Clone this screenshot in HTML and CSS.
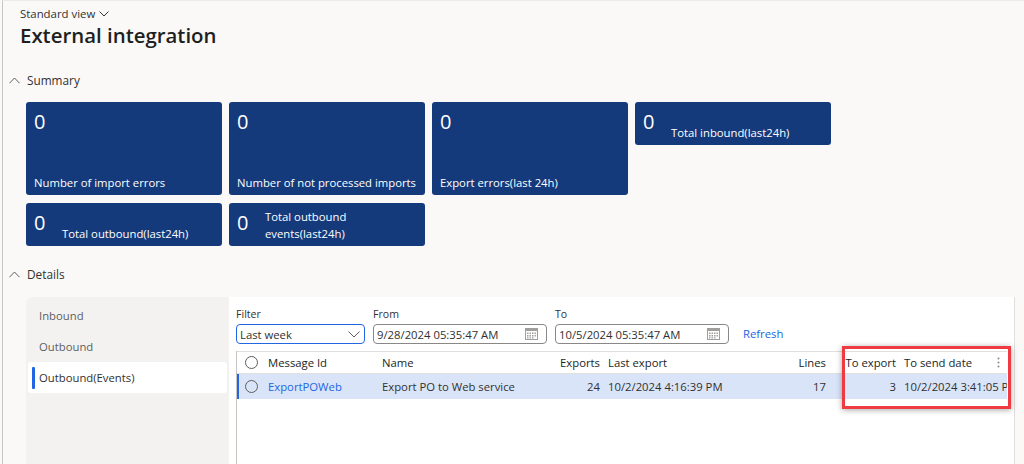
FILE: index.html
```html
<!DOCTYPE html>
<html lang="en">
<head>
<meta charset="utf-8">
<title>External integration</title>
<link rel="stylesheet" href="styles.css">
</head>
<body>
<div class="app">
  <header class="page-head">
    <div class="view-switch">Standard view
      <svg class="chev-down" width="10" height="6" viewBox="0 0 10 6"><path d="M0.5 0.5 L5 5 L9.5 0.5" fill="none" stroke="#323130" stroke-width="1"/></svg>
    </div>
    <h1 class="title">External integration</h1>
  </header>

  <section class="fasttab">
    <div class="fasttab-head">
      <svg class="chev-up" width="11" height="7" viewBox="0 0 11 7"><path d="M0.5 6.2 L5.5 1 L10.5 6.2" fill="none" stroke="#605e5c" stroke-width="1"/></svg>
      <span>Summary</span>
    </div>
    <div class="tiles">
      <div class="tile tile-lg"><div class="tile-num">0</div><div class="tile-label">Number of import errors</div></div>
      <div class="tile tile-lg"><div class="tile-num">0</div><div class="tile-label">Number of not processed imports</div></div>
      <div class="tile tile-lg"><div class="tile-num">0</div><div class="tile-label">Export errors(last 24h)</div></div>
      <div class="tile tile-sm"><div class="tile-num">0</div><div class="tile-label">Total inbound(last24h)</div></div>
      <div class="tile tile-sm"><div class="tile-num">0</div><div class="tile-label">Total outbound(last24h)</div></div>
      <div class="tile tile-sm"><div class="tile-num">0</div><div class="tile-label">Total outbound<br>events(last24h)</div></div>
    </div>
  </section>

  <section class="fasttab">
    <div class="fasttab-head details-head">
      <svg class="chev-up" width="11" height="7" viewBox="0 0 11 7"><path d="M0.5 6.2 L5.5 1 L10.5 6.2" fill="none" stroke="#605e5c" stroke-width="1"/></svg>
      <span>Details</span>
    </div>
    <div class="details">
      <nav class="vtabs">
        <div class="vtab">Inbound</div>
        <div class="vtab">Outbound</div>
        <div class="vtab vtab-active">Outbound(Events)</div>
      </nav>
      <div class="tab-body">
        <div class="filters">
          <div class="field">
            <label class="field-label">Filter</label>
            <div class="input select">
              <span>Last week</span>
              <svg width="12" height="7" viewBox="0 0 12 7"><path d="M0.5 0.5 L6 6 L11.5 0.5" fill="none" stroke="#605e5c" stroke-width="1"/></svg>
            </div>
          </div>
          <div class="field">
            <label class="field-label">From</label>
            <div class="input date">
              <span>9/28/2024 05:35:47 AM</span>
              <svg class="cal" width="13" height="12" viewBox="0 0 13 12">
                <rect x="0.5" y="0.5" width="12" height="11" fill="none" stroke="#a19f9d"/>
                <rect x="0.5" y="0.5" width="12" height="2.5" fill="#a19f9d"/>
                <g fill="#a19f9d">
                  <rect x="2" y="4.5" width="1.5" height="1.5"/><rect x="4.5" y="4.5" width="1.5" height="1.5"/><rect x="7" y="4.5" width="1.5" height="1.5"/><rect x="9.5" y="4.5" width="1.5" height="1.5"/>
                  <rect x="2" y="7" width="1.5" height="1.5"/><rect x="4.5" y="7" width="1.5" height="1.5"/><rect x="7" y="7" width="1.5" height="1.5"/><rect x="9.5" y="7" width="1.5" height="1.5"/>
                  <rect x="2" y="9.2" width="1.5" height="1.3"/><rect x="4.5" y="9.2" width="1.5" height="1.3"/><rect x="7" y="9.2" width="1.5" height="1.3"/>
                </g>
              </svg>
            </div>
          </div>
          <div class="field">
            <label class="field-label">To</label>
            <div class="input date">
              <span>10/5/2024 05:35:47 AM</span>
              <svg class="cal" width="13" height="12" viewBox="0 0 13 12">
                <rect x="0.5" y="0.5" width="12" height="11" fill="none" stroke="#a19f9d"/>
                <rect x="0.5" y="0.5" width="12" height="2.5" fill="#a19f9d"/>
                <g fill="#a19f9d">
                  <rect x="2" y="4.5" width="1.5" height="1.5"/><rect x="4.5" y="4.5" width="1.5" height="1.5"/><rect x="7" y="4.5" width="1.5" height="1.5"/><rect x="9.5" y="4.5" width="1.5" height="1.5"/>
                  <rect x="2" y="7" width="1.5" height="1.5"/><rect x="4.5" y="7" width="1.5" height="1.5"/><rect x="7" y="7" width="1.5" height="1.5"/><rect x="9.5" y="7" width="1.5" height="1.5"/>
                  <rect x="2" y="9.2" width="1.5" height="1.3"/><rect x="4.5" y="9.2" width="1.5" height="1.3"/><rect x="7" y="9.2" width="1.5" height="1.3"/>
                </g>
              </svg>
            </div>
          </div>
          <a class="refresh">Refresh</a>
        </div>

        <div class="grid">
          <div class="row head">
            <div class="cell c-radio"><span class="radio"></span></div>
            <div class="cell">Message Id</div>
            <div class="cell">Name</div>
            <div class="cell num">Exports</div>
            <div class="cell">Last export</div>
            <div class="cell num">Lines</div>
            <div class="cell num">To export</div>
            <div class="cell c-last">To send date
              <svg class="kebab" width="3" height="11" viewBox="0 0 3 11"><circle cx="1.5" cy="1.5" r="1" fill="#8a8886"/><circle cx="1.5" cy="5.5" r="1" fill="#8a8886"/><circle cx="1.5" cy="9.5" r="1" fill="#8a8886"/></svg>
            </div>
          </div>
          <div class="row data selected">
            <div class="cell c-radio"><span class="radio"></span></div>
            <div class="cell link">ExportPOWeb</div>
            <div class="cell">Export PO to Web service</div>
            <div class="cell num">24</div>
            <div class="cell">10/2/2024 4:16:39 PM</div>
            <div class="cell num">17</div>
            <div class="cell num">3</div>
            <div class="cell c-last clip">10/2/2024 3:41:05 PM</div>
          </div>
        </div>

        <div class="callout"></div>
      </div>
    </div>
  </section>
</div>
</body>
</html>
```

FILE: styles.css
```css
* { box-sizing: border-box; }

html, body {
  margin: 0;
  padding: 0;
  width: 1024px;
  height: 464px;
  overflow: hidden;
  background: #faf9f8;
  font-family: "Open Sans", "Noto Sans", sans-serif;
  color: #323130;
}

.app {
  height: 464px;
  margin-left: 2px;
  border-left: 1px solid #c8c6c4;
  border-top: 1px solid #edebe9;
  overflow: hidden;
}

.page-head {
  padding: 5px 0 0 17px;
}

.view-switch {
  font-size: 11.4px;
  line-height: 16px;
  color: #323130;
  display: flex;
  align-items: center;
  gap: 4px;
}

.title {
  margin: 0;
  font-size: 20.4px;
  line-height: 26px;
  font-weight: 600;
  color: #201f1e;
}

.fasttab-head {
  display: flex;
  align-items: center;
  gap: 7px;
  padding-left: 6px;
  margin-top: 23px;
  font-size: 11.8px;
  line-height: 18px;
  color: #323130;
}

.tiles {
  display: grid;
  grid-template-columns: repeat(4, 196px);
  grid-template-rows: 93px 43px;
  column-gap: 7px;
  row-gap: 8px;
  margin: 13px 0 0 23px;
}

.tile {
  background: #143a7c;
  color: #ffffff;
  border-radius: 3px;
  padding: 0 8px;
}

.tile-num {
  font-size: 20px;
  line-height: 24px;
  padding-top: 8px;
}

.tile-label {
  font-size: 11.3px;
  line-height: 17px;
  white-space: nowrap;
}

.tile-lg {
  display: flex;
  flex-direction: column;
  justify-content: space-between;
  padding-bottom: 4px;
}

.tile-sm {
  height: 43px;
  display: flex;
  align-items: flex-start;
}

.tile-sm .tile-num {
  width: 28px;
  flex: none;
}

.tile-sm .tile-label {
  align-self: flex-end;
  padding-bottom: 4px;
}

.details-head {
  margin-top: 19px;
}

.details {
  display: flex;
  margin: 14px 0 0 23px;
  height: 168px;
  width: 989px;
}

.vtabs {
  width: 203px;
  flex: none;
  background: #f3f2f1;
  border-top-left-radius: 7px;
  padding: 3px 2px 0 2px;
}

.vtab {
  height: 31px;
  line-height: 31px;
  padding-left: 11px;
  font-size: 11.3px;
  color: #605e5c;
  position: relative;
  border-radius: 3px;
}

.vtab-active {
  background: #ffffff;
  color: #323130;
}

.vtab-active::before {
  content: "";
  position: absolute;
  left: 4px;
  top: 5px;
  width: 3px;
  height: 22px;
  background: #2266e3;
  border-radius: 1px;
}

.tab-body {
  flex: 1;
  background: #ffffff;
  padding: 9px 0 0 7px;
  position: relative;
  border-right: 1px solid #e1dfdd;
}

.filters {
  display: flex;
  align-items: flex-end;
  gap: 8px;
}

.field {
  display: flex;
  flex-direction: column;
}

.field-label {
  font-size: 10.6px;
  line-height: 16px;
  color: #323130;
  margin-bottom: 2px;
}

.input {
  height: 20px;
  border: 1px solid #8a8886;
  border-radius: 4px;
  display: flex;
  align-items: center;
  justify-content: space-between;
  font-size: 11.3px;
  color: #323130;
  background: #ffffff;
}

.select {
  width: 129px;
  border-color: #2266e3;
  padding: 0 4px 0 3px;
}

.date {
  width: 174px;
  padding: 0 8px 0 3px;
}

.refresh {
  margin-left: 6px;
  height: 20px;
  line-height: 20px;
  font-size: 11.3px;
  color: #2266e3;
}

.grid {
  margin-top: 7px;
  width: 771px;
  border-left: 1px solid #c8c6c4;
  height: 120px;
}

.row {
  display: grid;
  grid-template-columns: 27px 114px 178px 48px 156px 70px 70px 107px;
}

.head {
  height: 23px;
  border-top: 1px solid #e1dfdd;
  border-bottom: 1px solid #e1dfdd;
  align-items: center;
}

.data {
  height: 25px;
  align-items: center;
}

.selected {
  background: #dae4f8;
  box-shadow: inset 2px 0 0 #2266e3;
}

.cell {
  font-size: 11.3px;
  line-height: 16px;
  padding: 0 4px;
  white-space: nowrap;
  overflow: hidden;
  color: #323130;
}

.head .cell {
  color: #201f1e;
}

.cell.num {
  text-align: right;
}

.c-radio {
  display: flex;
  justify-content: center;
  padding: 0 0 0 1px;
}

.radio {
  width: 13px;
  height: 13px;
  border: 1px solid #605e5c;
  border-radius: 50%;
  background: #ffffff;
}

.selected .radio {
  background: transparent;
}

.link {
  color: #2266e3;
}

.c-last {
  display: flex;
  justify-content: space-between;
  align-items: center;
}

.clip {
  padding-right: 0;
}

.kebab {
  margin-right: 3px;
  flex: none;
}

.callout {
  position: absolute;
  left: 613px;
  top: 49px;
  width: 169px;
  height: 63px;
  border: 3px solid #ee3a40;
  box-shadow: 0 1px 6px rgba(0, 0, 0, 0.35);
  pointer-events: none;
}
```
